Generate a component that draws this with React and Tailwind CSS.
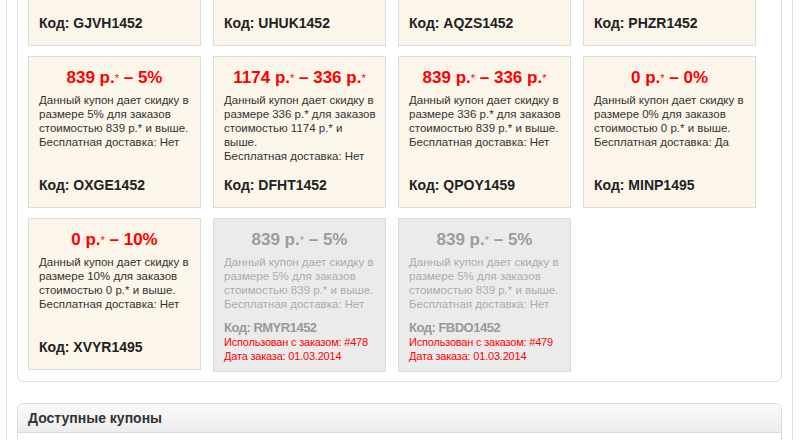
import React from 'react';

const cond = (p, s, tail = ['стоимостью ' + s + ' р.* и выше.']) => [
  'Данный купон дает скидку в',
  'размере ' + p + ' для заказов',
  ...tail,
];

// купоны пользователя (строки как в макете)
const coupons = [
  { title: '839 р.* – 5%', text: [...cond('5%', '839'), 'Бесплатная доставка: Нет'], code: 'GJVH1452' },
  { title: '839 р.* – 10%', text: [...cond('10%', '839'), 'Бесплатная доставка: Нет'], code: 'UHUK1452' },
  { title: '839 р.* – 15%', text: [...cond('15%', '839'), 'Бесплатная доставка: Нет'], code: 'AQZS1452' },
  { title: '0 р.* – 5%', text: [...cond('5%', '0'), 'Бесплатная доставка: Нет'], code: 'PHZR1452' },
  { title: '839 р.* – 5%', text: [...cond('5%', '839'), 'Бесплатная доставка: Нет'], code: 'OXGE1452' },
  { title: '1174 р.* – 336 р.*', text: [...cond('336 р.*', '1174', ['стоимостью 1174 р.* и', 'выше.']), 'Бесплатная доставка: Нет'], code: 'DFHT1452' },
  { title: '839 р.* – 336 р.*', text: [...cond('336 р.*', '839'), 'Бесплатная доставка: Нет'], code: 'QPOY1459' },
  { title: '0 р.* – 0%', text: [...cond('0%', '0'), 'Бесплатная доставка: Да'], code: 'MINP1495' },
  { title: '0 р.* – 10%', text: [...cond('10%', '0'), 'Бесплатная доставка: Нет'], code: 'XVYR1495' },
  { title: '839 р.* – 5%', text: [...cond('5%', '839'), 'Бесплатная доставка: Нет'], code: 'RMYR1452', used: { order: '#478', date: '01.03.2014' } },
  { title: '839 р.* – 5%', text: [...cond('5%', '839'), 'Бесплатная доставка: Нет'], code: 'FBDO1452', used: { order: '#479', date: '01.03.2014' } },
];

function Title({ value, used }) {
  // звездочку поднимаем как в оригинале
  const parts = value.split('*');
  return (
    <div className={`text-center font-bold text-[17px] leading-[20px] ${used ? 'text-[#9c9c9c]' : 'text-[#ff0000]'}`}>
      {parts.map((p, i) => (
        <React.Fragment key={i}>
          {p}
          {i < parts.length - 1 && <sup className="text-[11px] font-normal relative top-[-1px]">*</sup>}
        </React.Fragment>
      ))}
    </div>
  );
}

function Coupon({ c }) {
  if (c.used) {
    return (
      <div className="w-[173px] border border-[#dcdcdc] bg-[#ebebeb] px-[10px] pt-[11px] pb-[8px] flex flex-col">
        <Title value={c.title} used />
        <div className="mt-[5px] text-[11.5px] leading-[14px] text-[#ababab] whitespace-nowrap">
          {c.text.map((t, i) => <div key={i}>{t}</div>)}
        </div>
        <div className="mt-[11px] text-[13px] leading-[12px] font-bold tracking-[-0.5px] text-[#999]">Код: {c.code}</div>
        <div className="mt-[1px] text-[11px] leading-[14px] text-[#ff0000] tracking-[-0.2px]">
          <div>Использован с заказом: {c.used.order}</div>
          <div>Дата заказа: {c.used.date}</div>
        </div>
      </div>
    );
  }
  return (
    <div className="w-[173px] h-[152px] border border-[#dcdcdc] bg-[#fcf5e9] px-[10px] pt-[11px] pb-[12px] flex flex-col">
      <Title value={c.title} />
      <div className="mt-[5px] text-[11.5px] leading-[14px] text-[#333] whitespace-nowrap">
        {c.text.map((t, i) => <div key={i}>{t}</div>)}
      </div>
      <div className="mt-auto text-[14px] leading-[20px] font-bold text-[#222]">Код: {c.code}</div>
    </div>
  );
}

export default function App() {
  return (
    <div className="h-[440px] overflow-hidden bg-white font-['Liberation_Sans',Arial,sans-serif]">
      <div className="ml-[6px] w-[787px] h-[600px] flex flex-col border-x border-[#dddddd] px-[10px]">
        {/* мои купоны */}
        <div className="mt-[-117px] border border-[#dddddd] rounded-b-[6px] px-[10px] pt-[10px] pb-[9px]">
          <div className="flex flex-wrap gap-x-[12px] gap-y-[10px]">
            {coupons.map((c, i) => <Coupon key={i} c={c} />)}
          </div>
        </div>

        {/* доступные купоны */}
        <div className="mt-[21px] border border-[#dddddd] rounded-t-[6px]">
          <div className="h-[29px] px-[10px] flex items-center bg-gradient-to-b from-[#fafafa] to-[#ededed] border-b border-[#dddddd] rounded-t-[6px]">
            <span className="text-[14px] font-bold text-[#333]">Доступные купоны</span>
          </div>
          <div className="h-[40px]" />
        </div>
      </div>
    </div>
  );
}
